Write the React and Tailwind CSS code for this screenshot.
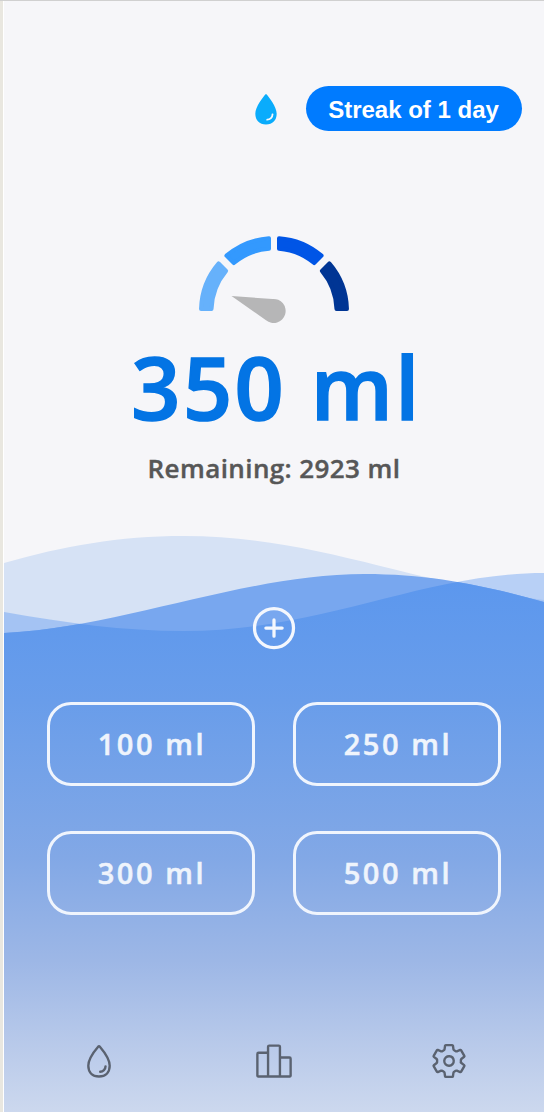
import React from 'react'
import {
  IoWater,
  IoWaterOutline,
  IoPodiumOutline,
  IoSettingsOutline,
  IoAddCircleOutline,
} from 'react-icons/io5'

const AMOUNTS = [100, 250, 300, 500]

const SEGMENTS = [
  { from: 180, to: 135, startGap: 2, endGap: 5.5, color: '#66b1fb' },
  { from: 135, to: 90, startGap: 5.5, endGap: 5, color: '#3399fe' },
  { from: 90, to: 45, startGap: 5, endGap: 5.5, color: '#0055e6' },
  { from: 45, to: 0, startGap: 5.5, endGap: 2, color: '#003594' },
]

const NAV = [
  { label: 'Water', Icon: IoWaterOutline },
  { label: 'Ranking', Icon: IoPodiumOutline },
  { label: 'Settings', Icon: IoSettingsOutline },
]

// Ring slice with straight, parallel-sided gaps; the stroke rounds its corners
function segmentPath({ from, to, startGap, endGap }) {
  const point = (r, deg, gap) => {
    const a = (deg * Math.PI) / 180 + Math.asin(gap / r)
    return `${(75 + r * Math.cos(a)).toFixed(2)} ${(75 - r * Math.sin(a)).toFixed(2)}`
  }
  const outer = 73
  const inner = 62.5
  return [
    `M${point(outer, from, -startGap)}`,
    `A${outer} ${outer} 0 0 1 ${point(outer, to, endGap)}`,
    `L${point(inner, to, endGap)}`,
    `A${inner} ${inner} 0 0 0 ${point(inner, from, -startGap)}Z`,
  ].join(' ')
}

function Gauge() {
  return (
    <svg className="h-[90px] w-[150px]" viewBox="0 0 150 90">
      {SEGMENTS.map((s) => (
        <path
          key={s.from}
          d={segmentPath(s)}
          fill={s.color}
          stroke={s.color}
          strokeWidth="4"
          strokeLinejoin="round"
        />
      ))}
      <path d="M32.5 60L73.5 63A12 12 0 1 1 67 84.2Z" fill="#b6b6b7" />
    </svg>
  )
}

const FRONT = 'M0 97C120 91 242 38 361 38C433 38 490 52 541 66V576H0Z'
const MIDDLE = 'M0 76C62 87 120 95 180 95C320 95 420 37 541 37V576H0Z'

function Waves() {
  return (
    <svg
      className="absolute inset-x-0 bottom-0 h-[576px] w-full"
      viewBox="0 0 541 576"
      preserveAspectRatio="none"
    >
      <defs>
        <linearGradient id="sea" gradientUnits="userSpaceOnUse" x1="0" y1="36" x2="0" y2="576">
          <stop offset="0" stopColor="#5b97ee" />
          <stop offset="0.24" stopColor="#699dea" />
          <stop offset="0.53" stopColor="#82a8e6" />
          <stop offset="0.72" stopColor="#9db7e6" />
          <stop offset="0.88" stopColor="#b9caea" />
          <stop offset="1" stopColor="#ccd8ee" />
        </linearGradient>
        <clipPath id="middle">
          <path d={MIDDLE} />
        </clipPath>
      </defs>
      <path d="M0 27C60 10 115 0 180 0C310 0 405 46 541 64V576H0Z" fill="#d6e2f5" />
      <path d={MIDDLE} fill="#4a8cf0" fillOpacity="0.36" />
      <path d={FRONT} fill="#78a7ef" />
      <path d={FRONT} fill="url(#sea)" clipPath="url(#middle)" />
    </svg>
  )
}

export default function App() {
  return (
    <div className="h-[1112px] w-[544px] overflow-hidden border-t border-[#d0d0d0] bg-[#e9e7e0] pl-[3px] font-['Open_Sans',sans-serif]">
      <div className="relative flex h-[1111px] w-[541px] flex-col border-l border-white bg-[#f6f6f9]">
        <Waves />

        <header className="relative flex items-center justify-end pt-[85px] pr-[22.5px]">
          <IoWater size={38} className="mr-[21px] text-[#0aacfc]" />
          <div className="flex h-[45px] w-[216px] items-center justify-center rounded-full bg-[#007bff] pt-[3px] font-['Liberation_Sans',sans-serif] text-2xl font-bold whitespace-nowrap text-white">
            Streak of 1 day
          </div>
        </header>

        <main className="relative flex grow flex-col items-center">
          <div className="mt-[105px]">
            <Gauge />
          </div>
          <h1 className="mt-[11px] ml-[5px] text-[86px] leading-[100px] font-semibold tracking-[2.4px] whitespace-nowrap text-[#0374e4] [-webkit-text-stroke:1.6px_#0374e4]">
            350 ml
          </h1>
          <p className="mt-[13px] text-[26px] leading-[36px] font-semibold tracking-[0.4px] whitespace-nowrap text-[#575757] [-webkit-text-stroke:0.4px_#575757]">
            Remaining: 2923 ml
          </p>

          <button aria-label="Add amount" className="mt-[116px] text-[#f4f7fd]">
            <IoAddCircleOutline size={52} />
          </button>

          <div className="mt-[48px] grid grid-cols-[208px_208px] gap-x-[38px] gap-y-[45px]">
            {AMOUNTS.map((ml) => (
              <button
                key={ml}
                className="flex h-[84px] items-center justify-center rounded-[24px] border-3 border-[#f0f5fd] pl-[2px] text-[29px] font-semibold tracking-[2.6px] whitespace-nowrap text-[#eff4fc] [-webkit-text-stroke:0.5px_#eff4fc]"
              >
                {ml} ml
              </button>
            ))}
          </div>
        </main>

        <nav className="relative mb-[32px] flex h-[38px] items-center justify-between px-[76px] text-[#5a6270]">
          {NAV.map(({ label, Icon }) => (
            <button key={label} aria-label={label}>
              <Icon size={38} />
            </button>
          ))}
        </nav>
      </div>
    </div>
  )
}
